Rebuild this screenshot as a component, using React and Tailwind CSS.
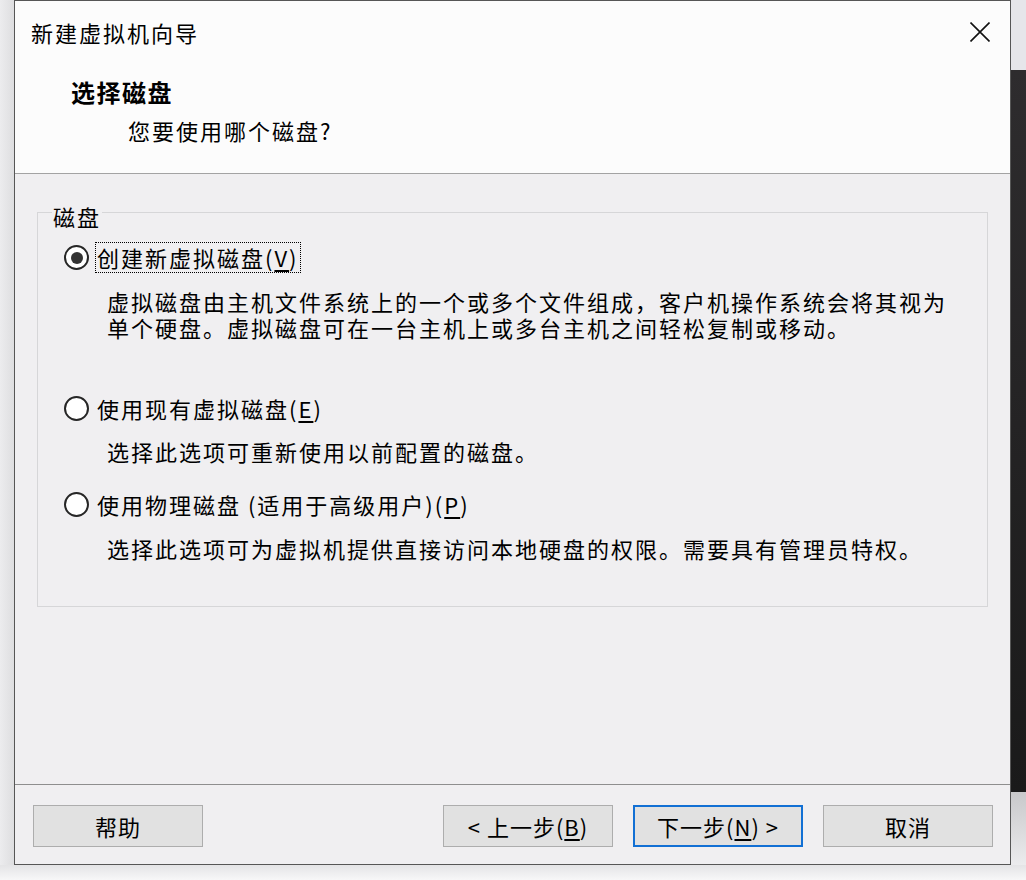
import React from "react";

function Radio({ checked }) {
  return (
    <span className="w-[25px] h-[25px] rounded-full border-2 border-[#262626] bg-white flex items-center justify-center shrink-0">
      {checked && <span className="w-[12px] h-[12px] rounded-full bg-[#333333]" />}
    </span>
  );
}

function Btn({ children, primary }) {
  return (
    <div
      className={
        "w-[170px] h-[42px] flex items-center justify-center bg-[#e1e1e1] text-[22px] tracking-[1px] text-black " +
        (primary ? "border-2 border-[#1270d4]" : "border border-[#adadad]")
      }
    >
      {children}
    </div>
  );
}

export default function App() {
  return (
    <div className="w-[1026px] h-[880px] flex flex-col bg-[#f2f2f3] font-['Noto_Sans_CJK_SC','Noto_Sans',sans-serif] text-black overflow-hidden">
      <div className="flex h-[865px]">
        <div className="w-[14px] bg-gradient-to-r from-[#ececee] to-[#dedee0]" />
        <div className="w-[997px] h-[865px] border border-[#565656] flex flex-col bg-[#f0eff1]">
          {/* header */}
          <div className="h-[173px] bg-[#fcfcfc] border-b border-[#a3a3a3] flex flex-col">
            <div className="h-[62px] flex items-center justify-between pl-[16px] pr-[20px]">
              <span className="text-[22px] leading-[30px] tracking-[2px]">新建虚拟机向导</span>
              <svg width="20" height="20" viewBox="0 0 20 20">
                <path d="M0.5 0.5 L19.5 19.5 M19.5 0.5 L0.5 19.5" stroke="#111" strokeWidth="1.6" />
              </svg>
            </div>
            <div className="mt-[13px] pl-[56px] text-[24px] leading-[32px] font-bold tracking-[1.5px]">选择磁盘</div>
            <div className="mt-[7px] pl-[113px] text-[22px] leading-[30px] tracking-[2px]">您要使用哪个磁盘?</div>
          </div>
          {/* body */}
          <div className="h-[610px] flex flex-col">
            <fieldset className="mt-[22px] mx-[22px] border border-[#d6d6d8] pb-[45px]">
              <legend className="ml-[14px] px-[1px] pt-[8px] text-[22px] leading-[24px] tracking-[2px]">磁盘</legend>
              <div className="mt-[14px] ml-[26px] flex items-center h-[31px]">
                <Radio checked />
                <span className="ml-[6px] px-[1px] h-[31px] leading-[29px] border border-dotted border-black text-[22px] tracking-[2px]">
                  创建新虚拟磁盘(<span className="underline underline-offset-[3px]">V</span>)
                </span>
              </div>
              <div className="mt-[15px] ml-[69px] mr-[30px] text-[22px] leading-[26px] tracking-[2px]">
                <div>虚拟磁盘由主机文件系统上的一个或多个文件组成，客户机操作系统会将其视为</div>
                <div>单个硬盘。虚拟磁盘可在一台主机上或多台主机之间轻松复制或移动。</div>
              </div>
              <div className="mt-[53px] ml-[26px] flex items-center h-[31px]">
                <Radio />
                <span className="ml-[6px] px-[1px] h-[31px] leading-[29px] border border-transparent text-[22px] tracking-[2px]">
                  使用现有虚拟磁盘(<span className="underline underline-offset-[3px]">E</span>)
                </span>
              </div>
              <div className="mt-[14px] ml-[69px] text-[22px] leading-[26px] tracking-[2px]">
                选择此选项可重新使用以前配置的磁盘。
              </div>
              <div className="mt-[25px] ml-[26px] flex items-center h-[31px]">
                <Radio />
                <span className="ml-[6px] px-[1px] h-[31px] leading-[29px] border border-transparent text-[22px] tracking-[2px]">
                  使用物理磁盘 (适用于高级用户)(<span className="underline underline-offset-[3px]">P</span>)
                </span>
              </div>
              <div className="mt-[15px] ml-[69px] text-[22px] leading-[26px] tracking-[2px]">
                选择此选项可为虚拟机提供直接访问本地硬盘的权限。需要具有管理员特权。
              </div>
            </fieldset>
          </div>
          {/* footer */}
          <div className="h-[80px] border-t border-[#8e8e8e] flex items-start justify-between pl-[18px] pr-[17px] pt-[20px]">
            <Btn>帮助</Btn>
            <div className="flex gap-[20px]">
              <Btn>
                &lt; 上一步(<span className="underline underline-offset-[3px]">B</span>)
              </Btn>
              <Btn primary>
                下一步(<span className="underline underline-offset-[3px]">N</span>) &gt;
              </Btn>
              <Btn>取消</Btn>
            </div>
          </div>
        </div>
        <div className="w-[15px] flex flex-col">
          <div className="h-[70px] bg-[#e6e6ea]" />
          <div className="h-[722px] bg-gradient-to-b from-[#2e2c2e] to-[#1a1a1a]" />
          <div className="flex-1 bg-gradient-to-b from-[#c8c8ca] to-[#ececee]" />
        </div>
      </div>
      <div className="h-[15px] bg-gradient-to-b from-[#e4e4e6] to-[#f7f7f8]" />
    </div>
  );
}
